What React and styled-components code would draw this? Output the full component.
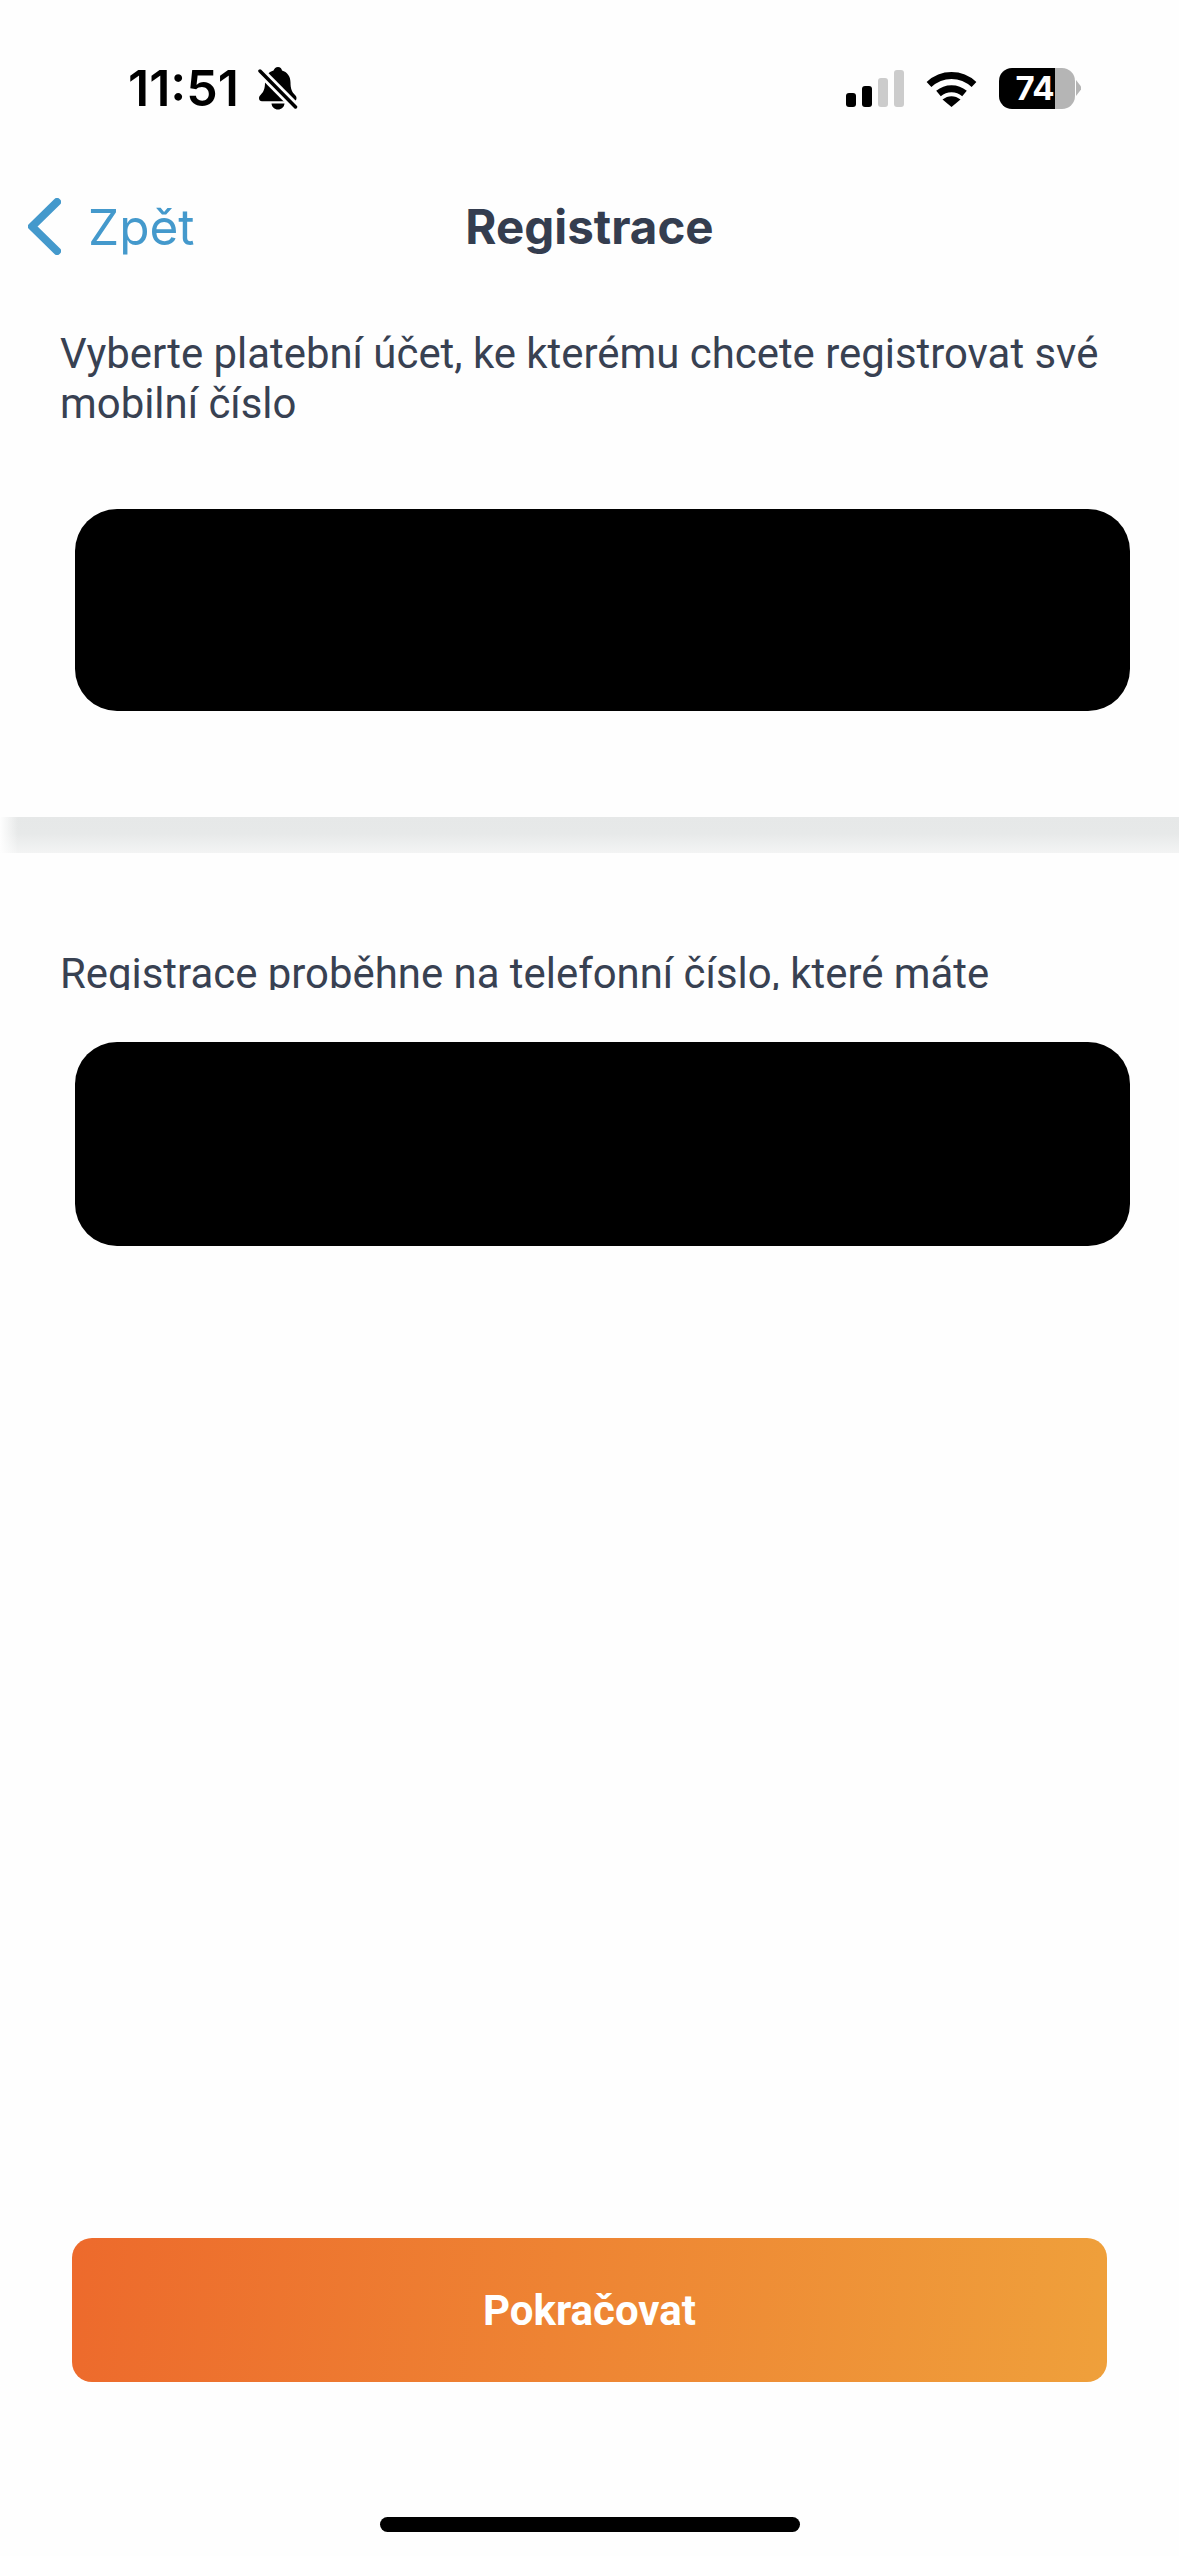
import React from 'react';
import styled, { createGlobalStyle } from 'styled-components';

const GlobalStyle = createGlobalStyle`
  html, body {
    margin: 0;
    padding: 0;
    background: #fefefe;
  }
  * {
    box-sizing: border-box;
  }
`;

const Page = styled.div`
  display: flex;
  flex-direction: column;
  width: 1179px;
  height: 2556px;
  overflow: hidden;
  background: #fefefe;
  font-family: 'Roboto', sans-serif;
`;

const StatusBar = styled.div`
  display: flex;
  align-items: center;
  justify-content: space-between;
  height: 42px;
  margin-top: 67px;
  padding: 0 98px 0 128px;
`;

const StatusGroup = styled.div`
  display: flex;
  align-items: center;
  gap: ${(p) => p.$gap || 0}px;
`;

const Clock = styled.span`
  font-family: 'Inter', sans-serif;
  font-size: 50px;
  font-weight: 600;
  line-height: 42px;
  color: #000;
`;

const SignalBars = styled.div`
  display: flex;
  align-items: flex-end;
  gap: 6px;
  height: 37px;
`;

const Bar = styled.span`
  width: 10px;
  height: ${(p) => p.$h}px;
  border-radius: 3px;
  background: ${(p) => (p.$on ? '#000' : '#cccccc')};
`;

const Battery = styled.div`
  display: flex;
  align-items: center;
  gap: 1px;
`;

const BatteryBody = styled.div`
  display: flex;
  align-items: center;
  justify-content: flex-end;
  width: 76px;
  height: 41px;
  padding-right: 21px;
  border-radius: 13px;
  overflow: hidden;
  background: linear-gradient(90deg, #000 74%, #b5b5b5 74%);
  color: #fff;
  font-family: 'Inter', sans-serif;
  font-size: 33px;
  font-weight: 700;
  line-height: 41px;
  letter-spacing: -0.5px;
`;

const BatteryNub = styled.span`
  width: 5px;
  height: 16px;
  background: #b5b5b5;
  clip-path: polygon(0 0, 100% 40%, 100% 60%, 0 100%);
`;

const NavBar = styled.div`
  display: grid;
  grid-template-columns: 1fr auto 1fr;
  align-items: center;
  height: 75px;
  margin-top: 80px;
  padding-left: 28px;
`;

const BackLink = styled.div`
  display: flex;
  align-items: center;
  gap: 27px;
  color: #4499cc;
  font-family: 'Inter', sans-serif;
  font-size: 49.5px;
  line-height: 58px;
`;

const Title = styled.h1`
  margin: 0 28px 0 0;
  color: #343d4f;
  font-family: 'Inter', sans-serif;
  font-size: 47.5px;
  font-weight: 700;
  line-height: 58px;
`;

const Paragraph = styled.p`
  margin: ${(p) => p.$top}px 60px 0;
  height: ${(p) => (p.$clip ? `${p.$clip}px` : 'auto')};
  overflow: hidden;
  color: #384152;
  font-size: 41.9px;
  line-height: 50px;
`;

const Redacted = styled.div`
  height: ${(p) => p.$h}px;
  margin: ${(p) => p.$top}px 49px 0 75px;
  border-radius: 42px;
  background: #000;
`;

const Divider = styled.div`
  height: 36px;
  margin-top: 106px;
  background:
    linear-gradient(90deg, #fefefe 0, rgba(254, 254, 254, 0) 18px),
    linear-gradient(180deg, #e6e8e8 0%, #e7e9e9 45%, #f3f4f4 100%);
`;

const ContinueButton = styled.button`
  display: block;
  width: 1035px;
  height: 144px;
  margin: auto 0 0 72px;
  border: 0;
  border-radius: 20px;
  background: linear-gradient(95deg, #ed6a2c 0%, #efa03b 100%);
  color: #fff;
  font-family: 'Roboto', sans-serif;
  font-size: 42px;
  font-weight: 700;
`;

const HomeIndicator = styled.div`
  width: 420px;
  height: 15px;
  margin: 135px auto 24px;
  border-radius: 8px;
  background: #000;
`;

const MutedBell = () => (
  <svg width="40" height="43" viewBox="0 0 40 43">
    <path
      fill="#000"
      d="M20 0c2.200 0 3.800 1.600 4 3.500 5 1.500 8.500 5.500 8.500 12 0 6.500 1.500 9.500 4.500 12.500 1 1 1.500 2 1.500 3.200 0 1.800-1.300 3-3 3H4c-1.700 0-3-1.200-3-3 0-1.200.5-2.200 1.500-3.200 3-3 4.500-6 4.500-12.500 0-6.500 3.500-10.500 8.500-12C16.200 1.600 17.800 0 20 0zM13.500 36.500h13c-.3 3.500-3 6-6.500 6s-6.200-2.500-6.500-6z"
    />
    <path d="M1 3 38.500 41" stroke="#fefefe" strokeWidth="9" />
    <path d="M2 4 37.500 40" stroke="#000" strokeWidth="3.500" strokeLinecap="round" />
  </svg>
);

const WifiIcon = () => (
  <svg width="51" height="37" viewBox="0 0 51 37">
    <path d="M3 14.500C16 2.500 35 2.500 48 14.500" fill="none" stroke="#000" strokeWidth="7" />
    <path d="M12.500 23.500C20 17 31 17 38.500 23.500" fill="none" stroke="#000" strokeWidth="7" />
    <path d="M16.500 29.500C22 25 29 25 34.500 29.500L25.500 37z" fill="#000" />
  </svg>
);

const BackChevron = () => (
  <svg width="33" height="57" viewBox="0 0 33 57">
    <path
      d="M29 4 4 28.500 29 53"
      fill="none"
      stroke="#4499cc"
      strokeWidth="8"
      strokeLinecap="round"
      strokeLinejoin="round"
    />
  </svg>
);

export default function App() {
  return (
    <Page>
      <GlobalStyle />
      <StatusBar>
        <StatusGroup $gap={19}>
          <Clock>11:51</Clock>
          <MutedBell />
        </StatusGroup>
        <StatusGroup $gap={22}>
          <SignalBars>
            <Bar $h={14} $on />
            <Bar $h={21} $on />
            <Bar $h={29} />
            <Bar $h={37} />
          </SignalBars>
          <WifiIcon />
          <Battery>
            <BatteryBody>74</BatteryBody>
            <BatteryNub />
          </Battery>
        </StatusGroup>
      </StatusBar>

      <NavBar>
        <BackLink>
          <BackChevron />
          <span>Zpět</span>
        </BackLink>
        <Title>Registrace</Title>
      </NavBar>

      <Paragraph $top={65}>
        Vyberte platební účet, ke kterému chcete registrovat své mobilní číslo
      </Paragraph>
      <Redacted $top={80} $h={202} />
      <Divider />

      <Paragraph $top={96} $clip={41}>
        Registrace proběhne na telefonní číslo, které máte
      </Paragraph>
      <Redacted $top={52} $h={204} />

      <ContinueButton>Pokračovat</ContinueButton>
      <HomeIndicator />
    </Page>
  );
}
